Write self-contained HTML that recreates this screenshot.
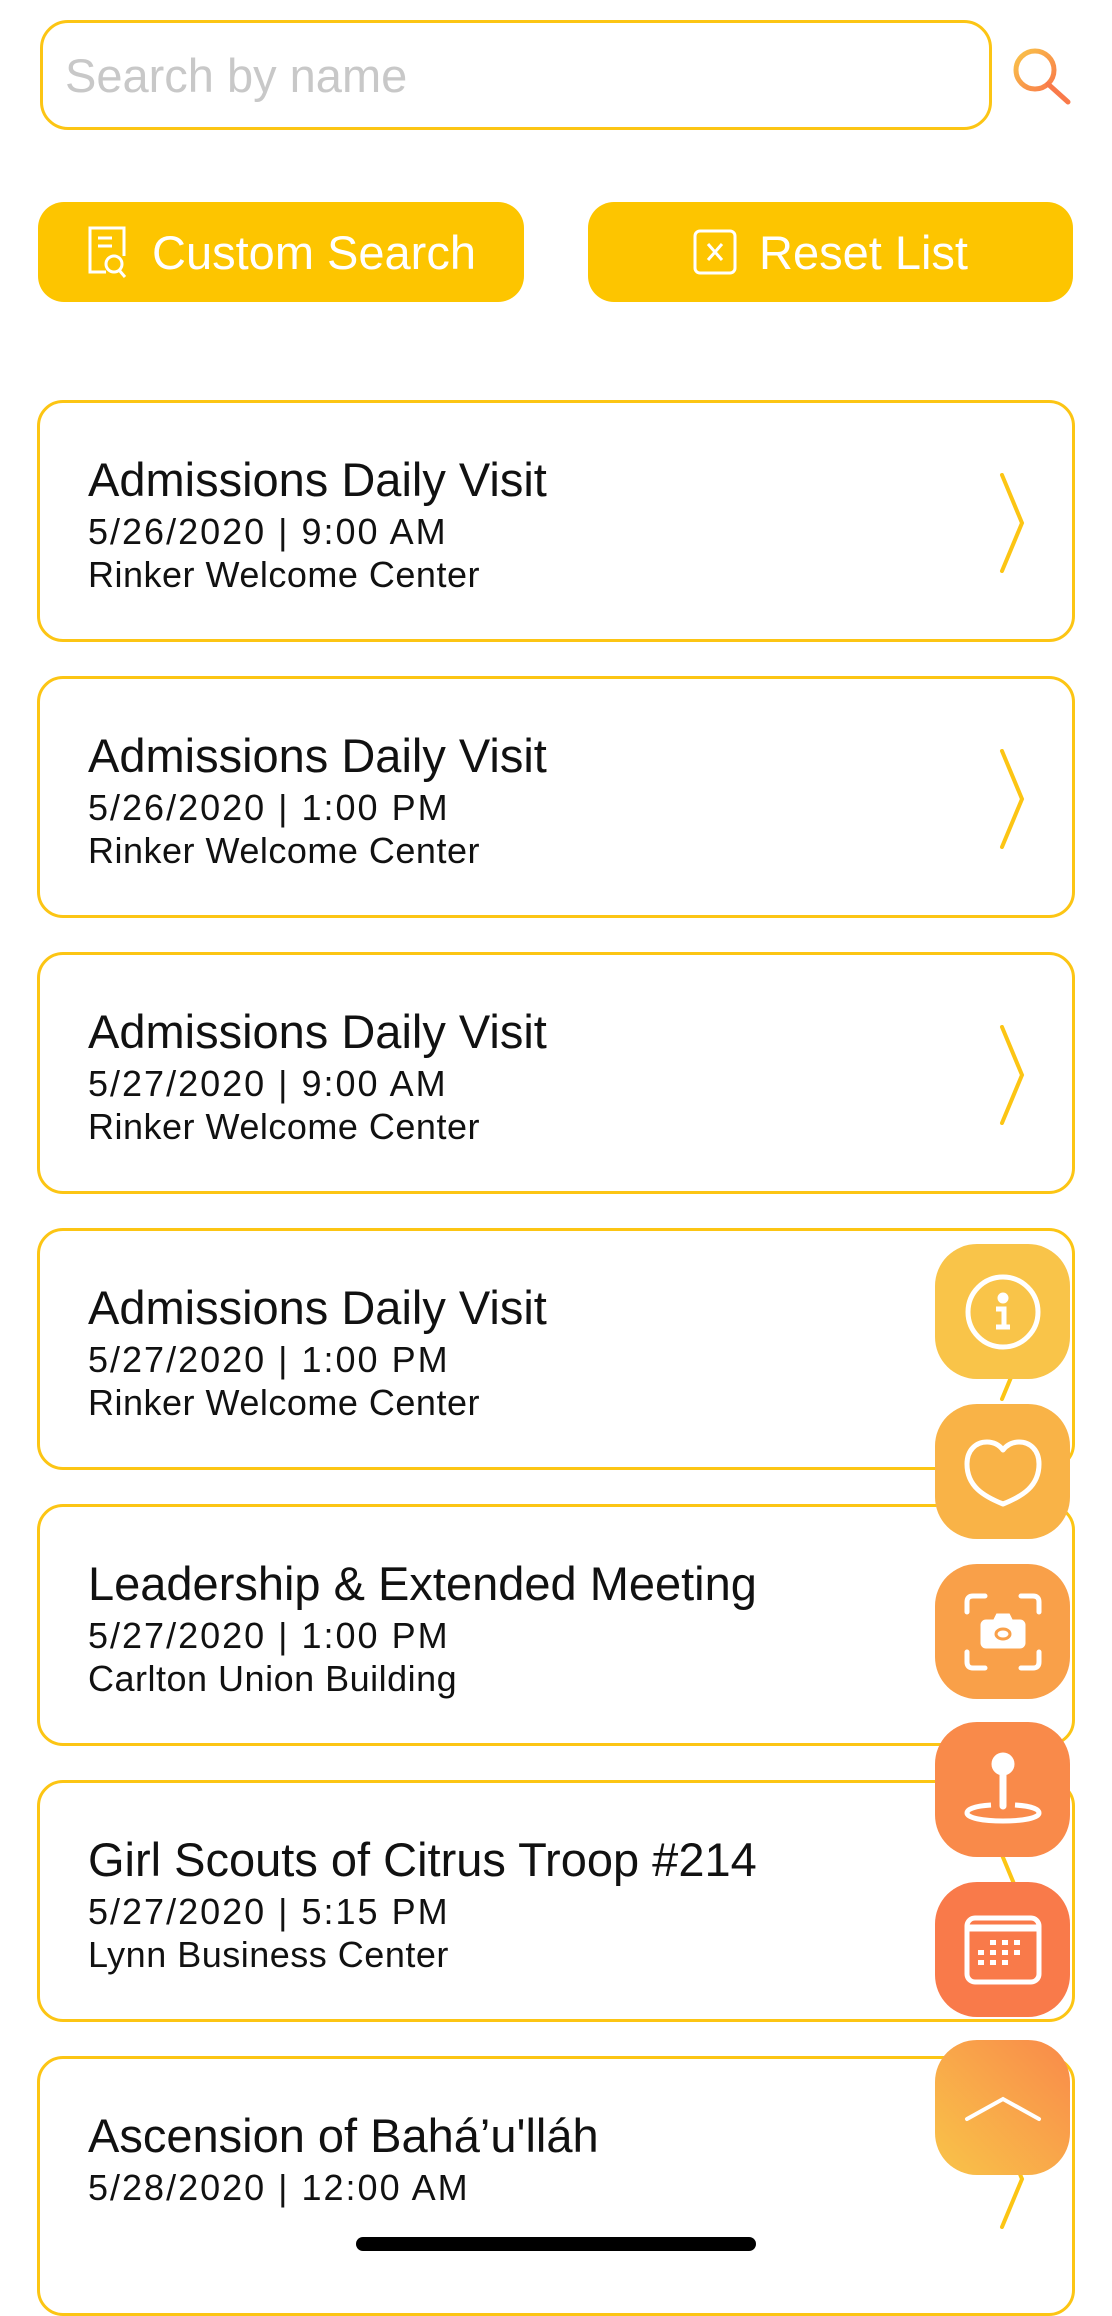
<!DOCTYPE html>
<html><head><meta charset="utf-8"><style>
*{margin:0;padding:0;box-sizing:border-box}
body{width:1112px;height:2277px;background:#fff;position:relative;overflow:hidden;font-family:"Liberation Sans",sans-serif}
.search{position:absolute;left:40px;top:20px;width:952px;height:110px;border:3px solid #FCC514;border-radius:28px;}
.search span{position:absolute;left:22px;top:25px;font-size:47px;color:#c8c8c8}
.btn{position:absolute;top:202px;height:100px;background:#FDC500;border-radius:26px;color:#fff;font-size:47px;display:flex;align-items:center;justify-content:center;gap:22px}
.card{position:absolute;left:37px;width:1038px;height:242px;border:3px solid #FCC514;border-radius:26px;background:#fff}
.card .t{position:absolute;left:48px;top:49px;font-size:47px;color:#111}
.card .d{position:absolute;left:48px;top:107px;font-size:36px;color:#111;line-height:43px;letter-spacing:0.5px}
.card .d b{font-weight:normal;letter-spacing:2px}
.card svg{position:absolute;left:958px;top:70px}
.fab{position:absolute;left:935px;width:135px;height:135px;border-radius:42px;display:flex;align-items:center;justify-content:center}
</style></head><body>
<div class="search"><span>Search by name</span></div>
<svg style="position:absolute;left:1010px;top:46px" width="64" height="60" viewBox="0 0 64 60"><defs><linearGradient id="sg" x1="0" y1="0" x2="1" y2="1"><stop offset="0" stop-color="#F9C449"/><stop offset="1" stop-color="#F97A4A"/></linearGradient></defs><circle cx="25" cy="24" r="19" fill="none" stroke="url(#sg)" stroke-width="5"/><line x1="38" y1="38" x2="58" y2="56" stroke="#F97A4A" stroke-width="5" stroke-linecap="round"/></svg>
<div class="btn" style="left:38px;width:486px"><svg width="44" height="56" viewBox="0 0 44 56" fill="none" stroke="#fff" stroke-width="3"><path d="M20 48H4V4h34v28"/><path d="M12 14h14M12 22h14"/><circle cx="28" cy="40" r="8"/><path d="M33 46l6 7"/></svg><span>Custom Search</span></div>
<div class="btn" style="left:588px;width:485px"><svg width="44" height="46" viewBox="0 0 44 46" fill="none" stroke="#fff" stroke-width="3"><rect x="2" y="2" width="40" height="42" rx="5"/><path d="M15 15l14 16M29 15L15 31"/></svg><span>Reset List</span></div>

<div class="card" style="top:400px"><div class="t">Admissions Daily Visit</div><div class="d"><b>5/26/2020 | 9:00 AM</b><br>Rinker Welcome Center</div><svg width="30" height="100"><path d="M4 2l20 48L4 98" fill="none" stroke="#FCC514" stroke-width="4" stroke-linecap="round"/></svg></div>
<div class="card" style="top:676px"><div class="t">Admissions Daily Visit</div><div class="d"><b>5/26/2020 | 1:00 PM</b><br>Rinker Welcome Center</div><svg width="30" height="100"><path d="M4 2l20 48L4 98" fill="none" stroke="#FCC514" stroke-width="4" stroke-linecap="round"/></svg></div>
<div class="card" style="top:952px"><div class="t">Admissions Daily Visit</div><div class="d"><b>5/27/2020 | 9:00 AM</b><br>Rinker Welcome Center</div><svg width="30" height="100"><path d="M4 2l20 48L4 98" fill="none" stroke="#FCC514" stroke-width="4" stroke-linecap="round"/></svg></div>
<div class="card" style="top:1228px"><div class="t">Admissions Daily Visit</div><div class="d"><b>5/27/2020 | 1:00 PM</b><br>Rinker Welcome Center</div><svg width="30" height="100"><path d="M4 2l20 48L4 98" fill="none" stroke="#FCC514" stroke-width="4" stroke-linecap="round"/></svg></div>
<div class="card" style="top:1504px"><div class="t">Leadership &amp; Extended Meeting</div><div class="d"><b>5/27/2020 | 1:00 PM</b><br>Carlton Union Building</div><svg width="30" height="100"><path d="M4 2l20 48L4 98" fill="none" stroke="#FCC514" stroke-width="4" stroke-linecap="round"/></svg></div>
<div class="card" style="top:1780px"><div class="t">Girl Scouts of Citrus Troop #214</div><div class="d"><b>5/27/2020 | 5:15 PM</b><br>Lynn Business Center</div><svg width="30" height="100"><path d="M4 2l20 48L4 98" fill="none" stroke="#FCC514" stroke-width="4" stroke-linecap="round"/></svg></div>
<div class="card" style="top:2056px;height:260px"><div class="t">Ascension of Bahá’u'lláh</div><div class="d"><b>5/28/2020 | 12:00 AM</b></div><svg width="30" height="100"><path d="M4 2l20 48L4 98" fill="none" stroke="#FCC514" stroke-width="4" stroke-linecap="round"/></svg></div>

<div class="fab" style="top:1244px;background:#F9C449"><svg width="80" height="80" viewBox="0 0 80 80" fill="none" stroke="#fff" stroke-width="5"><circle cx="40" cy="40" r="35"/><circle cx="40" cy="26" r="3" fill="#fff"/><path d="M33 37h8v18M33 55h14"/></svg></div>
<div class="fab" style="top:1404px;background:#F9B347"><svg width="80" height="76" viewBox="0 0 80 76" fill="none" stroke="#fff" stroke-width="5" stroke-linejoin="round"><path d="M40 70C20 62 4 52 4 30 4 16 13 8 24 8c8 0 13 4 16 8 3-4 8-8 16-8 11 0 20 8 20 22 0 22-16 32-36 40z"/></svg></div>
<div class="fab" style="top:1564px;background:#F9A049"><svg width="80" height="80" viewBox="0 0 80 80" fill="none" stroke="#fff" stroke-width="5" stroke-linecap="round"><path d="M4 20V10q0-6 6-6h12M58 4h12q6 0 6 6v10M76 60v10q0 6-6 6H58M22 76H10q-6 0-6-6V60"/><rect x="20" y="30" width="40" height="24" rx="3" fill="#fff"/><path d="M32 30l3-6h10l3 6" fill="#fff"/><ellipse cx="40" cy="42" rx="7" ry="5" stroke="#F9A049" stroke-width="3"/></svg></div>
<div class="fab" style="top:1722px;background:#F98A4A"><svg width="80" height="80" viewBox="0 0 80 80" fill="none" stroke="#fff" stroke-width="5"><circle cx="40" cy="14" r="9" fill="#fff"/><path d="M40 22v34" stroke-width="7" stroke-linecap="round"/><path d="M28 55C12 56 4 59 4 63c0 5 16 8 36 8s36-3 36-8c0-4-8-7-24-8"/></svg></div>
<div class="fab" style="top:1882px;background:#F97A4A"><svg width="80" height="80" viewBox="0 0 80 80" fill="none" stroke="#fff" stroke-width="5"><rect x="4" y="8" width="72" height="64" rx="8"/><path d="M6 18h68" stroke-width="7"/><g fill="#fff" stroke="none"><rect x="27" y="30" width="6" height="5"/><rect x="39" y="30" width="6" height="5"/><rect x="51" y="30" width="6" height="5"/><rect x="15" y="40" width="6" height="5"/><rect x="27" y="40" width="6" height="5"/><rect x="39" y="40" width="6" height="5"/><rect x="51" y="40" width="6" height="5"/><rect x="15" y="50" width="6" height="5"/><rect x="27" y="50" width="6" height="5"/><rect x="39" y="50" width="6" height="5"/></g></svg></div>
<div class="fab" style="top:2040px;background:linear-gradient(225deg,#F98A4A,#F9C449)"><svg width="80" height="30" viewBox="0 0 80 30" fill="none" stroke="#fff" stroke-width="4" stroke-linecap="round"><path d="M4 26L40 6l36 20"/></svg></div>

<div style="position:absolute;left:356px;top:2237px;width:400px;height:14px;border-radius:7px;background:#000"></div>
</body></html>
